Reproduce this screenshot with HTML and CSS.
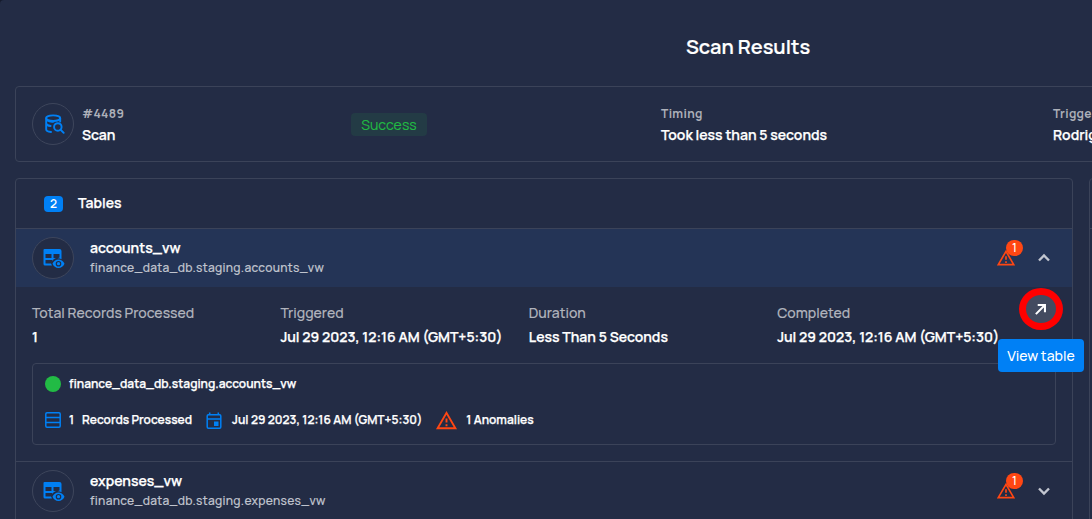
FILE: index.html
```html
<!DOCTYPE html>
<html lang="en">
<head>
<meta charset="utf-8">
<title>Scan Results</title>
<link rel="stylesheet" href="styles.css">
</head>
<body>
<svg class="defs" aria-hidden="true">
  <symbol id="table-eye" viewBox="0 0 22 22"><path fill="currentColor" fill-rule="evenodd" d="M2 1H17A2 2 0 0 1 19 3V11.200Q17.500 10.300 15.500 10.300L15 10.300L17 9.500V6H11V10H13.500Q10.800 11.200 9.700 13V12H3V15.500H8.500L9.500 17.500H2.500A1.500 1.500 0 0 1 1 16V2A1 1 0 0 1 2 1ZM3 6V10H9V6Z"/><path fill="currentColor" fill-rule="evenodd" d="M16 11.500C18.700 11.500 21 13.200 22 15.700C21 18.200 18.700 19.900 16 19.900S11 18.200 10 15.700C11 13.200 13.300 11.500 16 11.500ZM16 12.900A2.800 2.800 0 1 0 16 18.500A2.800 2.800 0 1 0 16 12.900Z"/><circle cx="16" cy="15.700" r="1.600" fill="currentColor"/></symbol>
  <symbol id="alert" viewBox="0 0 24 24"><path fill="currentColor" d="M12 2L1 21H23M12 6L19.530 19H4.470M11 10V14H13V10M11 16V18H13V16"/></symbol>
</svg>
<main class="page">
  <h1 class="title">Scan Results</h1>
  <section class="summary">
    <div class="summary-id">
      <span class="avatar"><svg class="icon-db" viewBox="0 0 24 24" fill="none" stroke="currentColor" stroke-width="2.200" stroke-linecap="round" stroke-linejoin="round"><ellipse cx="10.500" cy="4.800" rx="8" ry="3.200"/><path d="M2.500 4.800V17.500C2.500 19.500 5 20.400 8 20.600M18.500 4.800V8.500M2.500 11C3 12.600 5 13.400 7.500 13.700M2.500 6C4 8.200 8 9.300 11 8.700"/><circle cx="15.800" cy="14.800" r="4.300"/><path d="M19 18L22.500 21.500"/></svg></span>
      <div class="summary-text"><div class="label">#4489</div><div class="value">Scan</div></div>
    </div>
    <div><span class="status">Success</span></div>
    <div class="summary-text"><div class="label">Timing</div><div class="value">Took less than 5 seconds</div></div>
    <div class="summary-text"><div class="label">Triggered By</div><div class="value">Rodrigo</div></div>
  </section>
  <div class="panels">
    <section class="panel">
      <header class="panel-head"><span class="count">2</span><span class="value">Tables</span></header>
      <div class="row row-open">
        <span class="avatar"><svg class="icon-table"><use href="#table-eye"/></svg></span>
        <div class="row-text"><div class="value">accounts_vw</div><div class="path">finance_data_db.staging.accounts_vw</div></div>
        <span class="alert"><svg class="icon-alert"><use href="#alert"/></svg><span class="badge">1</span></span>
        <svg class="chevron" viewBox="0 0 14 10"><path d="M2 7.500L7 2.500L12 7.500"/></svg>
      </div>
      <div class="details">
        <div class="stats">
          <div><div class="stat-label">Total Records Processed</div><div class="value">1</div></div>
          <div><div class="stat-label">Triggered</div><div class="value">Jul 29 2023, 12:16 AM (GMT+5:30)</div></div>
          <div><div class="stat-label">Duration</div><div class="value">Less Than 5 Seconds</div></div>
          <div><div class="stat-label">Completed</div><div class="value">Jul 29 2023, 12:16 AM (GMT+5:30)</div></div>
        </div>
        <div class="result">
          <div class="result-line"><span class="dot"></span><span class="small">finance_data_db.staging.accounts_vw</span></div>
          <div class="result-line meta">
            <svg class="icon-rows" viewBox="0 0 16 16"><rect x=".8" y=".8" width="14.400" height="14.400" rx="1.200"/><path d="M1 5.600H15M1 10.400H15"/></svg>
            <span class="small num">1</span><span class="small">Records Processed</span>
            <svg class="icon-cal" viewBox="0 0 16 18"><rect x="1.200" y="2.700" width="13.600" height="13.600" rx="1.200"/><path d="M1 7H15M3.700 .5V3M12.300 .5V3"/><path class="day" d="M8 9.500H12.500V14H8Z"/></svg>
            <span class="small">Jul 29 2023, 12:16 AM (GMT+5:30)</span>
            <svg class="icon-alert-lg"><use href="#alert"/></svg>
            <span class="small">1 Anomalies</span>
          </div>
        </div>
        <span class="open-link"><svg viewBox="0 0 14 14"><path d="M2 12L11.500 2.500M4 2.200H11.800V10"/></svg></span>
        <span class="tooltip">View table</span>
      </div>
      <div class="row">
        <span class="avatar"><svg class="icon-table"><use href="#table-eye"/></svg></span>
        <div class="row-text"><div class="value">expenses_vw</div><div class="path">finance_data_db.staging.expenses_vw</div></div>
        <span class="alert"><svg class="icon-alert"><use href="#alert"/></svg><span class="badge">1</span></span>
        <svg class="chevron" viewBox="0 0 14 10"><path d="M2 2.500L7 7.500L12 2.500"/></svg>
      </div>
    </section>
    <section class="panel side"><div class="side-body"></div></section>
  </div>
</main>
</body>
</html>
```
FILE: styles.css
```css
* { box-sizing: border-box; }
html { background: #151b2c; overflow: hidden; }
body { margin: 0; width: 1092px; height: 519px; overflow: hidden; font-family: Manrope, Inter, "Open Sans", sans-serif; color: #fff; }
.defs { position: absolute; width: 0; height: 0; }
svg { display: block; flex: none; }
.page { width: 1496px; height: 519px; overflow: hidden; padding: 0 15px; background: #232c45; border-radius: 4px 4px 0 0; white-space: nowrap; }
.title { margin: 0; height: 86px; padding-top: 7px; line-height: 80px; text-align: center; font-size: 20px; font-weight: 600; -webkit-text-stroke: .2px; }
.summary { height: 76px; border: 1px solid #3b4359; border-radius: 4px; padding: 0 16px; display: grid; grid-template-columns: 319px 310px 392px 1fr; align-items: center; }
.summary-id { display: flex; align-items: center; gap: 8px; }
.summary-text { padding-top: 2px; }
.avatar { width: 42px; height: 42px; border: 1px solid #3e465c; border-radius: 50%; background: #232c45; display: flex; align-items: center; justify-content: center; color: #0080f5; flex: none; }
.icon-db { width: 21px; height: 21px; margin-left: 3px; }
.icon-table { width: 23px; height: 22px; margin: 1px 0 0 0; }
.label { font-size: 12px; line-height: 20px; font-weight: 700; letter-spacing: .35px; color: #adb0b9; }
.value { font-size: 14px; line-height: 22px; font-weight: 600; -webkit-text-stroke: .25px; }
.status { display: inline-flex; align-items: center; justify-content: center; width: 76px; height: 23px; margin-top: 1px; border-radius: 4px; background: #233b45; color: #21b843; font-size: 14px; letter-spacing: .1px; -webkit-text-stroke: .15px; }
.panels { display: grid; grid-template-columns: 1058px 1fr; gap: 16px; padding-top: 16px; }
.panel { border: 1px solid #3b4359; border-radius: 4px; height: 390px; }
.side-body { height: 50px; border-bottom: 1px solid #3b4359; }
.panel-head { height: 50px; border-bottom: 1px solid #3b4359; padding-left: 28px; display: flex; align-items: center; gap: 15px; }
.panel-head .value { padding-bottom: 2px; }
.count { width: 19px; height: 16px; border-radius: 4px; background: #0080f5; font-size: 12px; line-height: 16px; text-align: center; font-weight: 600; }
.row { height: 58px; display: flex; align-items: center; padding: 0 21px 0 16px; }
.row-open { background: #243456; }
.row-text { margin-left: 16px; flex: 1; padding-bottom: 2px; }
.row-text .value { line-height: 20px; }
.path { font-size: 12px; line-height: 19px; font-weight: 500; color: #c0c4ce; letter-spacing: .3px; -webkit-text-stroke: .15px; }
.alert { position: relative; width: 20px; height: 20px; margin-right: 21px; color: #ff4713; }
.icon-alert { width: 20px; height: 20px; }
.icon-alert-lg { width: 23px; height: 23px; margin: 0 8px 0 13px; color: #ff4713; }
.badge { position: absolute; left: 10px; top: -8px; width: 17px; height: 16px; border-radius: 8px; background: #ff4713; color: #fff; font-size: 12px; font-weight: 500; line-height: 16px; text-align: center; }
.chevron { width: 14px; height: 10px; fill: none; stroke: #c2c6d0; stroke-width: 2.400; }
.details { position: relative; height: 175px; border-bottom: 1px solid #3b4359; padding: 14px 16px 0; }
.stats { display: grid; grid-template-columns: repeat(4, 248.400px); height: 62px; }
.stat-label { font-size: 14px; line-height: 24px; font-weight: 500; color: #b0b3bc; -webkit-text-stroke: .15px; }
.stats .value { line-height: 24px; }
.result { height: 82px; border: 1px solid #3b4359; border-radius: 4px; padding: 11px 12px; }
.result-line { display: flex; align-items: center; height: 18px; }
.meta { margin-top: 18px; }
.dot { width: 16px; height: 16px; border-radius: 50%; background: #22bb45; margin-right: 8px; }
.small { font-size: 12px; font-weight: 600; padding-bottom: 2px; -webkit-text-stroke: .25px; }
.icon-rows { width: 16px; height: 16px; fill: none; stroke: #0080f5; stroke-width: 1.500; margin-right: 8px; }
.num { width: 13px; }
.icon-cal { width: 16px; height: 18px; margin: 1px 10px 0 14px; fill: none; stroke: #0080f5; stroke-width: 1.500; }
.icon-cal .day { fill: #0080f5; stroke: none; }
.open-link { position: absolute; left: 1003.400px; top: 1px; width: 44px; height: 42px; border: 7.500px solid #f00; border-radius: 50%; background: #434b60; display: flex; align-items: center; justify-content: center; }
.open-link svg { width: 13px; height: 13px; margin-right: 1px; fill: none; stroke: #fff; stroke-width: 2.200; }
.tooltip { position: absolute; left: 982px; top: 52px; width: 86px; height: 33px; border-radius: 4px; background: #0080f5; font-size: 14px; font-weight: 500; line-height: 33px; text-align: center; }
```
